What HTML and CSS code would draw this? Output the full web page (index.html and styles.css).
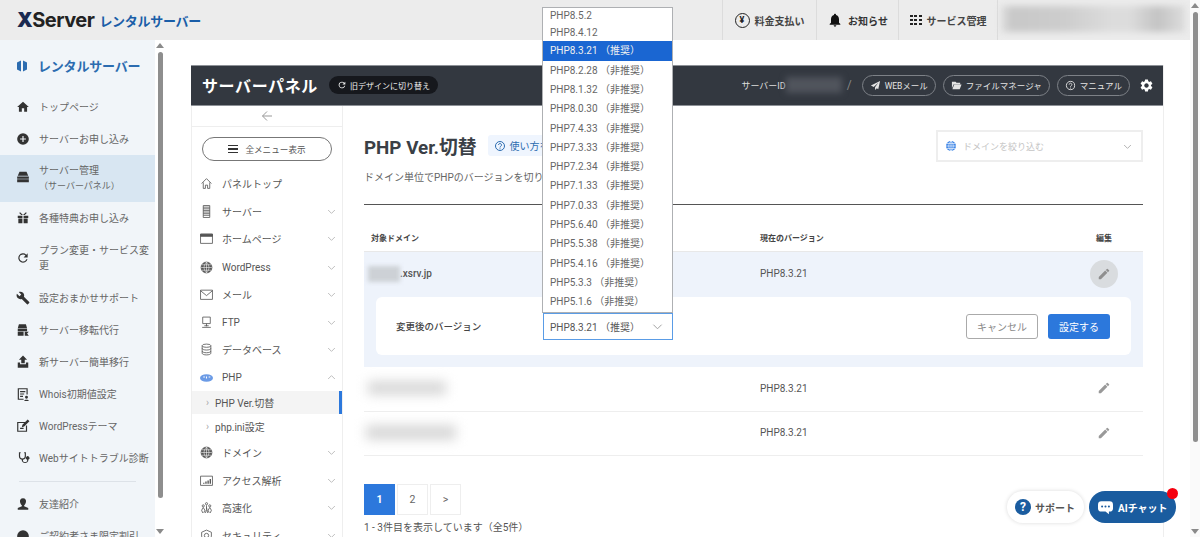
FILE: index.html
```html
<!DOCTYPE html>
<html lang="ja">
<head>
<meta charset="utf-8">
<title>PHP Ver.切替</title>
<link rel="stylesheet" href="styles.css">
</head>
<body>
<svg class="sprite" aria-hidden="true">
  <symbol id="i-home" viewBox="0 0 24 24"><path d="M10 20v-6h4v6h5v-8h3L12 3 2 12h3v8z"/></symbol>
  <symbol id="i-add" viewBox="0 0 24 24"><path d="M12 2a10 10 0 1 0 0 20 10 10 0 0 0 0-20zm5 11h-4v4h-2v-4H7v-2h4V7h2v4h4v2z"/></symbol>
  <symbol id="i-drive" viewBox="0 0 24 24"><path d="M6 3h12l3 7H3zM2 11h20v4H2zM2 16h20v5H2z"/></symbol>
  <symbol id="i-gift" viewBox="0 0 24 24"><path d="M3 8h8v4H3zM13 8h8v4h-8zM4 13h7v8H4zM13 13h7v8h-7zM7 2l5 5 5-5 1.500 1.500L15 7H9L5.500 3.500z"/></symbol>
  <symbol id="i-refresh" viewBox="0 0 24 24"><path d="M17.650 6.350A8 8 0 1 0 19.730 14h-2.080A6 6 0 1 1 12 6c1.660 0 3.140.69 4.220 1.780L13 11h7V4z"/></symbol>
  <symbol id="i-wrench" viewBox="0 0 24 24"><path d="M22.700 19l-9.100-9.100c.9-2.300.4-5-1.500-6.900-2-2-5-2.400-7.400-1.300L9 6 6 9 1.600 4.700C.4 7.100.9 10.100 2.900 12.100c1.900 1.900 4.600 2.400 6.900 1.500l9.100 9.100c.4.4 1 .4 1.400 0l2.300-2.300c.5-.4.5-1.100.1-1.400z"/></symbol>
  <symbol id="i-move" viewBox="0 0 24 24"><path d="M5 2h12l2 7H3zM3 10h16v4H3zM3 15h10v7H3zM15 15h7l-3 3 3 4h-7z"/></symbol>
  <symbol id="i-upload" viewBox="0 0 24 24"><path d="M9 14V8H5l7-7 7 7h-4v6zM3 13h4v3h10v-3h4v9H3z"/></symbol>
  <symbol id="i-whois" viewBox="0 0 24 24"><path d="M3 2h17v11h-2V4H5v16h8v2H3zM7 7h9v2H7zM7 11h7v2H7zM7 15h5v2H7zM18 15a2.500 2.500 0 1 1 0 5 2.500 2.500 0 0 1 0-5zM14 24c0-3 8-3 8 0z"/></symbol>
  <symbol id="i-theme" viewBox="0 0 24 24"><path d="M2 5h14v2H4v13h13v-9h2v11H2zM20 1l3 3-9 9-4 1 1-4zM7 15h6v2H7z"/></symbol>
  <symbol id="i-steth" viewBox="0 0 24 24"><path d="M5 2h3v2H7v5a4 4 0 0 0 8 0V4h-1V2h3v7a6 6 0 0 1-5 5.900V17a4 4 0 0 0 7 0v-2.200a3 3 0 1 1 2 0V17a6 6 0 0 1-11 0v-2.100A6 6 0 0 1 5 9z"/></symbol>
  <symbol id="i-friend" viewBox="0 0 24 24"><path d="M12 2c4 0 6 3 5 7-.4 2-1.600 4-3 5v2l7 3v3H3v-3l7-3v-2c-1.400-1-2.600-3-3-5-1-4 1-7 5-7z"/></symbol>
  <symbol id="i-coin" viewBox="0 0 24 24"><circle cx="12" cy="12" r="10"/></symbol>
  <symbol id="i-pencil" viewBox="0 0 24 24"><path d="M3 17.250V21h3.750L17.810 9.940l-3.750-3.750L3 17.250zM20.710 7.040a1 1 0 0 0 0-1.410l-2.340-2.340a1 1 0 0 0-1.410 0l-1.830 1.830 3.750 3.750 1.830-1.830z"/></symbol>
  <symbol id="i-bell" viewBox="0 0 24 24"><path d="M12 22c1.100 0 2-.9 2-2h-4c0 1.100.9 2 2 2zm6-6v-5c0-3.070-1.630-5.640-4.500-6.320V4c0-.83-.67-1.500-1.500-1.500s-1.500.67-1.500 1.500v.68C7.640 5.360 6 7.920 6 11v5l-2 2v1h16v-1l-2-2z"/></symbol>
  <symbol id="i-gear" viewBox="0 0 24 24"><path d="M19.140 12.940c.04-.3.06-.61.06-.94 0-.32-.02-.64-.07-.94l2.030-1.580a.49.49 0 0 0 .12-.61l-1.920-3.320a.49.49 0 0 0-.59-.22l-2.390.96c-.5-.38-1.030-.7-1.620-.94l-.36-2.540a.48.48 0 0 0-.48-.41h-3.840c-.24 0-.43.17-.47.41l-.36 2.540c-.59.24-1.130.57-1.620.94l-2.390-.96c-.22-.08-.47 0-.59.22L2.740 8.870c-.12.21-.08.47.12.61l2.030 1.580c-.05.3-.09.63-.09.94s.02.64.07.94l-2.030 1.580a.49.49 0 0 0-.12.61l1.920 3.320c.12.22.37.29.59.22l2.390-.96c.5.38 1.030.7 1.620.94l.36 2.54c.05.24.24.41.48.41h3.840c.24 0 .44-.17.47-.41l.36-2.54c.59-.24 1.130-.56 1.620-.94l2.390.96c.22.08.47 0 .59-.22l1.920-3.320c.12-.22.07-.47-.12-.61l-2.010-1.580zM12 15.600c-1.980 0-3.600-1.620-3.600-3.600s1.620-3.600 3.600-3.600 3.600 1.620 3.600 3.600-1.620 3.600-3.600 3.600z"/></symbol>
  <symbol id="i-send" viewBox="0 0 24 24"><path d="M22 2L2 12l6 3 10-9-7 10v6l4-4 3 2z"/></symbol>
  <symbol id="i-folder" viewBox="0 0 24 24"><path d="M2 4h8l2 2h8v3H6l-4 9zM7 10h16l-4 10H3z"/></symbol>
  <symbol id="i-help" viewBox="0 0 24 24"><path fill="none" stroke="currentColor" stroke-width="2" d="M12 3a9 9 0 1 0 0 18 9 9 0 0 0 0-18z"/><path fill="none" stroke="currentColor" stroke-width="2" d="M9 10a3 3 0 1 1 4.500 2.600c-1 .6-1.500 1-1.500 2.400"/><circle cx="12" cy="17.500" r="1.200"/></symbol>
  <symbol id="i-globe" viewBox="0 0 24 24"><circle cx="12" cy="12" r="10"/><path fill="none" stroke="#fff" stroke-width="1.200" d="M2 12h20M3.500 7h17M3.500 17h17M12 2v20M12 2c-6 6-6 14 0 20M12 2c6 6 6 14 0 20"/></symbol>
  <symbol id="o-home" viewBox="0 0 24 24"><path d="M3 12l9-9 9 9M6 10v11h4v-6h4v6h4V10"/></symbol>
  <symbol id="o-server" viewBox="0 0 24 24"><path d="M6 1h12v22H6zM6 7h12M6 13h12M6 10h12M6 4h12M6 16h12M6 19h12"/></symbol>
  <symbol id="o-window" viewBox="0 0 24 24"><path d="M1 4h22v17H1z"/><path d="M1 4h22v4H1z" fill="currentColor"/></symbol>
  <symbol id="o-mail" viewBox="0 0 24 24"><path d="M1 4h22v17H1zM1 5l11 9 11-9"/></symbol>
  <symbol id="o-ftp" viewBox="0 0 24 24"><path d="M5 2h14v12H5zM12 14v5M4 21h16M8 18h8"/></symbol>
  <symbol id="o-db" viewBox="0 0 24 24"><ellipse cx="12" cy="5" rx="8" ry="3"/><path d="M4 5v14c0 1.700 3.600 3 8 3s8-1.300 8-3V5M4 10c0 1.700 3.600 3 8 3s8-1.300 8-3M4 15c0 1.700 3.600 3 8 3s8-1.300 8-3"/></symbol>
  <symbol id="o-globe" viewBox="0 0 24 24"><circle cx="12" cy="12" r="10" fill="currentColor"/><path stroke="#fff" stroke-width="1" d="M2 12h20M3.500 7h17M3.500 17h17M12 2v20M12 2c-6 6-6 14 0 20M12 2c6 6 6 14 0 20"/></symbol>
  <symbol id="o-chart" viewBox="0 0 24 24"><path d="M1 4h22v17H1z"/><path stroke-width="2.500" d="M7 18v-2M11 18v-4M15 18v-6M19 18V9"/></symbol>
  <symbol id="o-speed" viewBox="0 0 24 24"><circle cx="6" cy="9" r="2"/><circle cx="12" cy="5" r="2"/><circle cx="18" cy="9" r="2"/><path d="M6 12l-3 5 2 5M6 12l3 5-2 5M12 8v8l-2 6M12 12l2 10M18 12l-3 5 2 5M18 12l3 5-2 5"/></symbol>
  <symbol id="o-shield" viewBox="0 0 24 24"><path d="M12 2l9 4v7c0 4-4 8-9 9-5-1-9-5-9-9V6z"/><circle cx="12" cy="12" r="4"/></symbol>
  <symbol id="i-chev" viewBox="0 0 12 12"><path fill="none" stroke="currentColor" stroke-width="1" d="M1.500 4L6 8.500 10.500 4"/></symbol>
</svg>

<div class="page">
  <div class="page-left">
    <header class="topbar">
      <div class="logo"><span class="logo-x"><b>X</b>Server</span><span class="logo-jp">レンタルサーバー</span></div>
      <nav class="topnav">
        <a class="topnav-item pay"><span class="yen">¥</span>料金支払い</a>
        <a class="topnav-item notice"><svg class="ic16"><use href="#i-bell"/></svg>お知らせ</a>
        <a class="topnav-item service"><span class="dots"><i></i><i></i><i></i><i></i><i></i><i></i><i></i><i></i><i></i></span>サービス管理</a>
        <div class="topnav-user"><span class="blur user-blur"></span></div>
      </nav>
    </header>

    <div class="below">
      <aside class="side">
        <div class="side-inner">
          <div class="side-title"><svg class="brand" viewBox="0 0 24 24"><path d="M10 1L2 5v14l8 4zM14 1l8 4v14l-8 4z"/></svg>レンタルサーバー</div>
          <a class="side-item"><svg class="ic14"><use href="#i-home"/></svg>トップページ</a>
          <a class="side-item"><svg class="ic14"><use href="#i-add"/></svg>サーバーお申し込み</a>
          <a class="side-item active"><svg class="ic14"><use href="#i-drive"/></svg><span>サーバー管理<small>（サーバーパネル）</small></span></a>
          <a class="side-item"><svg class="ic14"><use href="#i-gift"/></svg>各種特典お申し込み</a>
          <a class="side-item tall"><svg class="ic14"><use href="#i-refresh"/></svg><span>プラン変更・サービス変更</span></a>
          <a class="side-item"><svg class="ic14"><use href="#i-wrench"/></svg>設定おまかせサポート</a>
          <a class="side-item"><svg class="ic14"><use href="#i-move"/></svg>サーバー移転代行</a>
          <a class="side-item"><svg class="ic14"><use href="#i-upload"/></svg>新サーバー簡単移行</a>
          <a class="side-item"><svg class="ic14"><use href="#i-whois"/></svg>Whois初期値設定</a>
          <a class="side-item"><svg class="ic14"><use href="#i-theme"/></svg>WordPressテーマ</a>
          <a class="side-item"><svg class="ic14"><use href="#i-steth"/></svg>Webサイトトラブル診断</a>
          <hr class="side-rule">
          <a class="side-item"><svg class="ic14"><use href="#i-friend"/></svg>友達紹介</a>
          <a class="side-item"><svg class="ic14"><use href="#i-coin"/></svg>ご契約者さま限定割引</a>
        </div>
        <div class="scrollbar side-scroll"><span class="arrow up"></span><span class="thumb"></span><span class="arrow down"></span></div>
      </aside>

      <main class="main">
        <section class="panel">
          <div class="panel-head">
            <h2 class="panel-title">サーバーパネル</h2>
            <a class="old-design"><svg class="ic10"><use href="#i-refresh"/></svg>旧デザインに切り替え</a>
            <div class="panel-tools">
              <span class="server-id">サーバーID<span class="blur id-blur"></span></span>
              <span class="slash">/</span>
              <a class="pill"><svg class="ic11"><use href="#i-send"/></svg>WEBメール</a>
              <a class="pill"><svg class="ic11"><use href="#i-folder"/></svg>ファイルマネージャ</a>
              <a class="pill"><svg class="ic11"><use href="#i-help"/></svg>マニュアル</a>
              <svg class="gear"><use href="#i-gear"/></svg>
            </div>
          </div>

          <div class="panel-body">
            <nav class="pnav">
              <div class="pnav-back"><svg class="back-arrow" viewBox="0 0 12 12"><path d="M11 6H1.500M6 1.500L1.500 6 6 10.500"/></svg></div>
              <a class="all-menu"><span class="burger"><i></i><i></i><i></i></span>全メニュー表示</a>
              <a class="pnav-item"><svg class="oc"><use href="#o-home"/></svg>パネルトップ</a>
              <a class="pnav-item"><svg class="oc"><use href="#o-server"/></svg>サーバー<svg class="chev"><use href="#i-chev"/></svg></a>
              <a class="pnav-item"><svg class="oc"><use href="#o-window"/></svg>ホームページ<svg class="chev"><use href="#i-chev"/></svg></a>
              <a class="pnav-item latin"><svg class="oc"><use href="#o-globe"/></svg>WordPress<svg class="chev"><use href="#i-chev"/></svg></a>
              <a class="pnav-item"><svg class="oc"><use href="#o-mail"/></svg>メール<svg class="chev"><use href="#i-chev"/></svg></a>
              <a class="pnav-item latin"><svg class="oc"><use href="#o-ftp"/></svg>FTP<svg class="chev"><use href="#i-chev"/></svg></a>
              <a class="pnav-item"><svg class="oc"><use href="#o-db"/></svg>データベース<svg class="chev"><use href="#i-chev"/></svg></a>
              <a class="pnav-item latin"><svg class="php-ic" viewBox="0 0 24 14"><ellipse cx="12" cy="7" rx="12" ry="7"/><path fill="#fff" d="M6 4h3v2H6zM11 4h2v4h-2zM16 4h3v2h-3z"/></svg>PHP<svg class="chev open"><use href="#i-chev"/></svg></a>
              <a class="pnav-sub current"><span class="sub-arrow">›</span>PHP Ver.切替</a>
              <a class="pnav-sub"><span class="sub-arrow">›</span>php.ini設定</a>
              <a class="pnav-item"><svg class="oc"><use href="#o-globe"/></svg>ドメイン<svg class="chev"><use href="#i-chev"/></svg></a>
              <a class="pnav-item"><svg class="oc"><use href="#o-chart"/></svg>アクセス解析<svg class="chev"><use href="#i-chev"/></svg></a>
              <a class="pnav-item"><svg class="oc"><use href="#o-speed"/></svg>高速化<svg class="chev"><use href="#i-chev"/></svg></a>
              <a class="pnav-item"><svg class="oc"><use href="#o-shield"/></svg>セキュリティ<svg class="chev"><use href="#i-chev"/></svg></a>
            </nav>

            <div class="content">
              <div class="content-head">
                <div class="content-intro">
                  <div class="title-row">
                    <h1 class="page-title">PHP Ver.切替</h1>
                    <a class="howto"><svg class="ic12"><use href="#i-help"/></svg>使い方を</a>
                  </div>
                  <p class="desc">ドメイン単位でPHPのバージョンを切り</p>
                </div>
                <div class="filter"><svg class="ic12 globe-blue"><use href="#i-globe"/></svg>ドメインを絞り込む<svg class="filter-chev"><use href="#i-chev"/></svg></div>
              </div>

              <div class="thead">
                <span>対象ドメイン</span><span>現在のバージョン</span><span class="center">編集</span>
              </div>

              <div class="open-row">
                <div class="trow first">
                  <span class="domain"><span class="blur dom-blur"></span>.xsrv.jp</span>
                  <span class="ver">PHP8.3.21</span>
                  <span class="center"><span class="edit-btn"><svg class="ic14"><use href="#i-pencil"/></svg></span></span>
                </div>
                <div class="edit-card">
                  <span class="edit-label">変更後のバージョン</span>
                  <div class="select-wrap">
                    <ul class="options">
                      <li>PHP8.5.2</li>
                      <li>PHP8.4.12</li>
                      <li class="sel">PHP8.3.21 （推奨）</li>
                      <li>PHP8.2.28 （非推奨）</li>
                      <li>PHP8.1.32 （非推奨）</li>
                      <li>PHP8.0.30 （非推奨）</li>
                      <li>PHP7.4.33 （非推奨）</li>
                      <li>PHP7.3.33 （非推奨）</li>
                      <li>PHP7.2.34 （非推奨）</li>
                      <li>PHP7.1.33 （非推奨）</li>
                      <li>PHP7.0.33 （非推奨）</li>
                      <li>PHP5.6.40 （非推奨）</li>
                      <li>PHP5.5.38 （非推奨）</li>
                      <li>PHP5.4.16 （非推奨）</li>
                      <li>PHP5.3.3 （非推奨）</li>
                      <li>PHP5.1.6 （非推奨）</li>
                    </ul>
                    <div class="select-box">PHP8.3.21 （推奨）<svg class="select-chev"><use href="#i-chev"/></svg></div>
                  </div>
                  <div class="card-btns">
                    <a class="btn-cancel">キャンセル</a>
                    <a class="btn-ok">設定する</a>
                  </div>
                </div>
              </div>

              <div class="trow">
                <span class="domain"><span class="blur dom-blur2"></span></span>
                <span class="ver">PHP8.3.21</span>
                <span class="center"><svg class="ic14 pencil"><use href="#i-pencil"/></svg></span>
              </div>
              <div class="trow">
                <span class="domain"><span class="blur dom-blur3"></span></span>
                <span class="ver">PHP8.3.21</span>
                <span class="center"><svg class="ic14 pencil"><use href="#i-pencil"/></svg></span>
              </div>

              <div class="pager">
                <a class="pg on">1</a><a class="pg">2</a><a class="pg">&gt;</a>
              </div>
              <p class="count">1 - 3件目を表示しています（全5件）</p>
            </div>
          </div>
        </section>
      </main>
    </div>
  </div>
  <div class="scrollbar page-scroll"><span class="arrow up"></span><span class="thumb"></span><span class="arrow down"></span></div>
</div>

<div class="float-btns">
  <a class="support"><span class="q">?</span>サポート</a>
  <a class="chat"><svg class="chat-ic" viewBox="0 0 24 22"><path d="M6 2h12a5 5 0 0 1 5 5v5a5 5 0 0 1-5 5h-1v4l-5-4H6a5 5 0 0 1-5-5V7a5 5 0 0 1 5-5z"/><circle class="d" cx="7" cy="9.500" r="1.500"/><circle class="d" cx="12" cy="9.500" r="1.500"/><circle class="d" cx="17" cy="9.500" r="1.500"/></svg>AIチャット<span class="red-dot"></span></a>
</div>
</body>
</html>
```

FILE: styles.css
```css
* { box-sizing: border-box; }
html, body { margin: 0; padding: 0; height: 537px; overflow: hidden; }
body {
  font-family: Roboto, "Noto Sans CJK JP", sans-serif;
  color: #555;
  background: #fff;
  font-size: 10px;
  position: relative;
}
a { color: inherit; text-decoration: none; }
h1, h2, p, ul { margin: 0; padding: 0; }
svg { fill: currentColor; flex: none; }
.sprite { display: none; }
.ic10 { width: 10px; height: 10px; }
.ic11 { width: 11px; height: 11px; }
.ic12 { width: 12px; height: 12px; }
.ic14 { width: 14px; height: 14px; }
.ic16 { width: 16px; height: 16px; }
.blur { display: block; background: #bbb; filter: blur(5px); }

.page { display: flex; height: 537px; }
.page-left { width: 1190px; flex: none; height: 537px; display: flex; flex-direction: column; }

.scrollbar {
  width: 10px;
  flex: none;
  background: #fafafa;
  display: flex;
  flex-direction: column;
  align-items: center;
  padding: 3px 0;
}
.thumb { width: 5px; background: #8e8e8e; border-radius: 3px; }
.arrow { width: 0; height: 0; border-left: 4px solid transparent; border-right: 4px solid transparent; flex: none; }
.arrow.up { border-bottom: 5px solid #8a8a8a; }
.arrow.down { border-top: 5px solid #8a8a8a; margin-top: auto; }
.page-scroll { height: 537px; }
.page-scroll .thumb { height: 430px; margin-top: 4px; }
.side-scroll { height: 497px; background: #fff; }
.side-scroll .thumb { height: 446px; margin-top: 4px; }

/* top bar */
.topbar {
  height: 40px;
  flex: none;
  background: #ececec;
  display: flex;
  align-items: center;
  justify-content: space-between;
  padding-left: 17px;
}
.logo { display: flex; align-items: center; gap: 5px; }
.logo-x { font-family: Inter, sans-serif; font-weight: 700; font-size: 20px; color: #222; letter-spacing: -0.5px; }
.logo-x b { color: #1a2a50; }
.logo-jp { font-weight: 700; font-size: 13px; color: #1a5ea8; letter-spacing: -0.3px; }
.topnav { display: flex; height: 40px; }
.topnav-item {
  display: flex;
  align-items: center;
  justify-content: center;
  gap: 5px;
  font-size: 10px;
  font-weight: 700;
  color: #444;
  border-left: 1px solid #dcdcdc;
}
.pay { width: 94px; }
.notice { width: 82px; color: #333; }
.notice svg { color: #111; }
.service { width: 99px; }
.yen {
  width: 15px; height: 15px;
  border: 1.5px solid #222;
  border-radius: 50%;
  font-size: 9px;
  line-height: 12px;
  text-align: center;
  color: #222;
}
.dots { display: grid; grid-template-columns: repeat(3, 3px); gap: 1.500px; }
.dots i { width: 3px; height: 2.500px; background: #222; }
.topnav-user { width: 193px; border-left: 1px solid #dcdcdc; padding: 6px 5px 8px 3px; }
.user-blur {
  height: 26px;
  background: linear-gradient(90deg, #dedede 0, #c8c8c8 6%, #cdcdcd 35%, #dcdcdc 60%, #dcdcdc 70%, #c4c4c4 85%, #dcdcdc 100%);
  filter: blur(3px);
}

.below { display: flex; flex: 1; min-height: 0; }

/* left sidebar */
.side { width: 165px; flex: none; display: flex; height: 497px; overflow: hidden; }
.side-inner { width: 155px; flex: none; background: #f1f5f9; padding-top: 15px; height: 497px; overflow: hidden; }
.side-title {
  display: flex; align-items: center; gap: 10px;
  padding-left: 16px;
  height: 21px;
  margin-bottom: 15px;
  font-size: 13px;
  font-weight: 700;
  color: #2c6cb0;
  letter-spacing: -0.2px;
}
.brand { width: 12px; height: 14px; color: #2c6cb0; }
.side-item {
  display: flex;
  align-items: center;
  height: 32px;
  padding: 0 0 1px 16px;
  font-size: 10px;
  color: #666;
  white-space: nowrap;
}
.side-item svg { color: #333; width: 14px; height: 14px; margin-right: 9px; }
.side-item.active { height: 47px; background: #d8e6f2; padding-bottom: 3px; }
.side-item small { display: block; font-size: 9px; margin-top: 2px; }
.side-item.tall { height: 48px; padding-right: 6px; white-space: normal; line-height: 15px; }
.side-item.tall span { display: block; }
.side-rule { border: 0; border-top: 1px solid #dde2e8; margin: 7px 19px 6px; }

/* main */
.main { flex: 1; min-width: 0; padding: 25px 26px 0; height: 497px; }
.panel { border-right: 1px solid #eee; height: 472px; }
.panel-head {
  height: 41px;
  background: #333840;
  border-top: 1px solid #8d9197;
  border-bottom: 1px solid #8d9197;
  display: flex;
  align-items: center;
  padding: 0 9px 1px 11px;
  color: #fff;
}
.panel-title { font-size: 16px; font-weight: 700; letter-spacing: .6px; color: #fff; }
.old-design {
  margin-left: 11px;
  height: 18px;
  padding: 0 8px;
  border-radius: 9px;
  background: #16181d;
  font-size: 8px;
  display: flex; align-items: center; gap: 3px;
  color: #eee;
}
.panel-tools { margin-left: auto; display: flex; align-items: center; }
.server-id { font-size: 9px; color: #ddd; display: flex; align-items: center; }
.id-blur { width: 56px; height: 16px; background: #50545c; filter: blur(3px); }
.slash { color: #888; margin: 0 10px 0 5px; font-size: 12px; }
.pill {
  height: 21px;
  padding: 0 7px;
  border: 1px solid #7d8187;
  border-radius: 11px;
  font-size: 8.500px;
  color: #e4e4e4;
  display: flex; align-items: center; gap: 4px;
  margin-right: 7px;
}
.gear { width: 15px; height: 15px; color: #fff; margin-left: 2px; }

.panel-body { display: flex; }
.pnav { width: 152px; flex: none; border-left: 1px solid #eee; border-right: 1px solid #eee; height: 431px; overflow: hidden; }
.pnav-back { height: 21px; border-bottom: 1px solid #eee; display: flex; align-items: center; justify-content: center; }
.back-arrow { width: 12px; height: 12px; fill: none; stroke: #999; stroke-width: 1; margin-bottom: 1px; }
.all-menu {
  margin: 10px 10px 9px;
  height: 24px;
  border: 1px solid #777;
  border-radius: 12px;
  display: flex; align-items: center; justify-content: center; gap: 7px;
  font-size: 8.600px;
  color: #555;
}
.burger { display: flex; flex-direction: column; gap: 2px; }
.burger i { display: block; width: 10px; height: 1.300px; background: #333; }
.pnav-item {
  display: flex; align-items: center;
  height: 27.600px;
  padding-left: 8px;
  font-size: 10px;
  color: #555;
}
.pnav-item.latin { padding-top: 2px; }
.oc { width: 13px; height: 13px; margin-right: 9px; fill: none; stroke: #555; stroke-width: 1.500; color: #555; }
.php-ic { width: 13px; height: 8px; margin-right: 9px; color: #6b9be6; }
.chev { width: 9px; height: 9px; margin-left: auto; margin-right: 6px; color: #aaa; }
.chev.open { transform: rotate(180deg); }
.pnav-sub {
  display: flex; align-items: center;
  height: 23px;
  padding-left: 14px;
  font-size: 10px;
  color: #555;
}
.sub-arrow { color: #aaa; margin-right: 6px; font-size: 10px; }
.pnav-sub.current { background: #f4f4f4; border-right: 3px solid #2c78dc; margin-bottom: 1px; }
.pnav-sub + .pnav-sub { margin-bottom: 1px; }

.content { flex: 1; min-width: 0; padding: 0 20px 0 21px; }
.content-head { display: flex; justify-content: space-between; padding-top: 24px; height: 99px; border-bottom: 1px solid #555; }
.title-row { display: flex; align-items: center; gap: 11px; height: 27px; margin-top: 2px; }
.page-title { font-size: 18.800px; font-weight: 700; color: #3a3f46; }
.howto {
  height: 21px; width: 70px; padding: 0 0 0 6px;
  background: #eff5fe; border-radius: 3px;
  display: flex; align-items: center; gap: 4px;
  font-size: 10px; color: #2c6cb0;
}
.desc { font-size: 10px; margin-top: 10px; color: #666; }
.filter {
  width: 207px; height: 32px;
  border: 2px solid #eee;
  display: flex; align-items: center;
  padding: 0 9px 0 7px;
  gap: 6px;
  font-size: 9px;
  color: #c4c4c4;
}
.globe-blue { color: #3f86e6; }
.filter-chev { width: 9px; height: 9px; margin-left: auto; color: #999; }

.thead, .trow { display: grid; grid-template-columns: 396px 1fr 78px; align-items: center; }
.thead { height: 47px; padding: 18px 0 0 7px; font-size: 8px; font-weight: 700; color: #444; border-bottom: 1px solid #e8e8e8; grid-template-columns: 389px 1fr 78px; }
.center { text-align: center; display: flex; justify-content: center; }
.trow { height: 44.500px; padding-bottom: 1px; border-bottom: 1px solid #eee; font-size: 10px; color: #555; }
.open-row { background: #eef3fb; height: 115px; }
.trow.first { border-bottom: 0; height: 43px; padding-bottom: 0; }
.domain { padding-left: 4px; display: flex; align-items: center; font-weight: 500; color: #555; }
.dom-blur { width: 32px; height: 16px; background: #cdd1d6; filter: blur(2px); }
.dom-blur2 { width: 78px; height: 14px; background: #d8d8d8; filter: blur(6px); }
.dom-blur3 { width: 90px; height: 15px; margin-left: -2px; background: #d8d8d8; filter: blur(6px); }
.ver { color: #555; }
.edit-btn {
  width: 28px; height: 28px; border-radius: 50%;
  background: #d9dcdf;
  display: flex; align-items: center; justify-content: center;
  color: #8f8f8f;
}
.pencil { color: #999; }
.edit-card {
  margin: 2px 12px 0;
  height: 58px;
  background: #fff;
  border-radius: 6px;
  display: flex; align-items: center;
  padding: 0 21px 0 20px;
}
.edit-label { width: 147px; font-size: 9.500px; font-weight: 500; color: #444; }
.select-wrap { position: relative; width: 130px; }
.select-box {
  height: 27px;
  border: 1px solid #5a9ce6;
  background: #fff;
  display: flex; align-items: center;
  padding: 0 7px 0 6px;
  font-size: 10px;
  color: #555;
}
.select-chev { width: 11px; height: 11px; margin-left: auto; margin-right: 2px; color: #999; }
.options {
  position: absolute;
  left: -1px; bottom: 100%;
  width: 131px;
  list-style: none;
  background: #fff;
  border: 1px solid #aeb0b3;
  z-index: 5;
  font-size: 10px;
}
.options li { height: 19.300px; line-height: 19px; padding-left: 7px; color: #666; white-space: nowrap; }
.options li:nth-child(1), .options li:nth-child(2) { height: 16.500px; line-height: 16px; }
.options li.sel { background: #1a66d2; color: #f0f0f0; }
.card-btns { margin-left: auto; display: flex; gap: 10px; }
.btn-cancel, .btn-ok {
  height: 25px; border-radius: 3px;
  display: flex; align-items: center; justify-content: center;
  font-size: 10px;
}
.btn-cancel { width: 72px; border: 1px solid #aaa; color: #888; background: #fff; }
.btn-ok { width: 62px; background: #2c78dc; color: #fff; }

.pager { display: flex; gap: 2px; margin-top: 28px; }
.pg {
  width: 31px; height: 31px;
  border: 1px solid #eee;
  display: flex; align-items: center; justify-content: center;
  font-size: 10.500px;
  color: #666;
}
.pg.on { background: #2c78dc; border-color: #2c78dc; color: #fff; font-weight: 700; }
.count { font-size: 10px; margin-top: 4px; color: #555; }

/* floating buttons */
.float-btns { position: absolute; left: 1007px; top: 491px; display: flex; gap: 5px; z-index: 6; }
.support, .chat {
  height: 32px; border-radius: 16px;
  display: flex; align-items: center;
  font-size: 10px; font-weight: 700;
}
.support { width: 77px; background: #fff; box-shadow: 0 0 4px rgba(0,0,0,.15); padding-left: 8px; gap: 4px; color: #555; }
.q {
  width: 16px; height: 16px; border-radius: 50%;
  background: #1a5c9f; color: #fff;
  font-size: 12px; line-height: 16px; text-align: center;
}
.chat { width: 87px; background: #1a5c9f; color: #fff; padding-left: 8px; gap: 4px; position: relative; }
.chat-ic { width: 17px; height: 15px; color: #fff; }
.chat-ic .d { fill: #1a5c9f; }
.red-dot { position: absolute; right: -2px; top: -3px; width: 11px; height: 11px; border-radius: 50%; background: #f5000f; }
```
